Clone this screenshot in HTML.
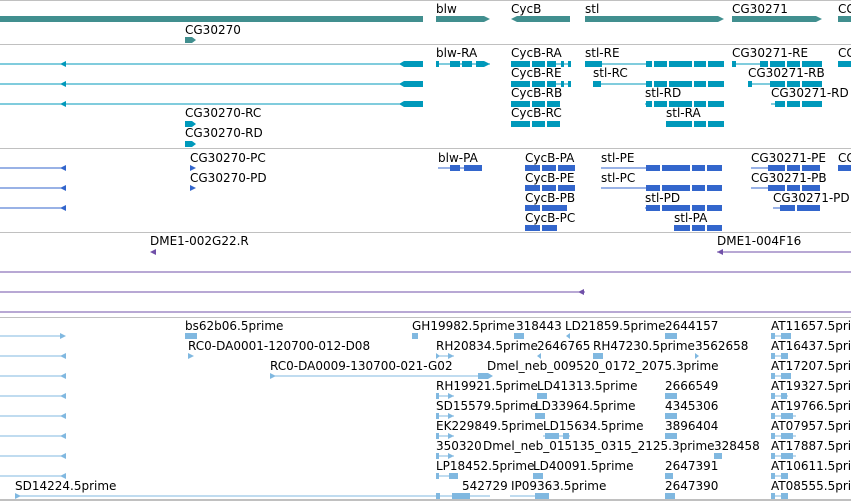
<!DOCTYPE html>
<html><head><meta charset="utf-8"><style>
html,body{margin:0;padding:0;background:#fff;width:851px;height:501px;overflow:hidden}
svg{display:block}
text{font-family:"DejaVu Sans",sans-serif;font-size:12px;fill:#000}
</style></head><body>
<svg width="851" height="501" xmlns="http://www.w3.org/2000/svg">
<g fill="#c0c0c0">
<rect x="0" y="0" width="851" height="1"/><rect x="0" y="44" width="851" height="1"/>
<rect x="0" y="148" width="851" height="1"/><rect x="0" y="232" width="851" height="1"/>
<rect x="0" y="317" width="851" height="1"/><rect x="0" y="499" width="851" height="2"/>
</g>
<g fill="#418f8f">
<rect x="0" y="16" width="423" height="6"/>
<polygon points="436,16 484,16 490,19 484,22 436,22"/>
<polygon points="511,19 517,16 570,16 570,22 517,22"/>
<polygon points="585,16 718,16 724,19 718,22 585,22"/>
<polygon points="732,16 816,16 822,19 816,22 732,22"/>
<rect x="838" y="16" width="13" height="6"/>
<polygon points="185,37 192,37 196,40 192,43 185,43"/>
</g>
<text x="185" y="34">CG30270</text>
<text x="436" y="13">blw</text><text x="511" y="13">CycB</text><text x="585" y="13">stl</text><text x="732" y="13">CG30271</text><text x="838" y="13">CG</text>
<g fill="#0099bb">
<rect x="0" y="63.5" width="423" height="1"/><rect x="0" y="83.5" width="423" height="1"/><rect x="0" y="103.5" width="423" height="1"/>
<polygon points="60,64 66,61 66,67"/><polygon points="60,84 66,81 66,87"/><polygon points="60,104 66,101 66,107"/>
<polygon points="399,64 404,61 423,61 423,67 404,67"/><polygon points="399,84 404,81 423,81 423,87 404,87"/><polygon points="399,104 404,101 423,101 423,107 404,107"/>
<polygon points="185,121 192,121 196,124 192,127 185,127"/><polygon points="185,141 192,141 196,144 192,147 185,147"/>
<rect x="436" y="63.5" width="54" height="1"/><rect x="436" y="61" width="3" height="6"/><rect x="450" y="61" width="10" height="6"/><rect x="462" y="61" width="10" height="6"/><polygon points="476,61 484,61 490,64 484,67 476,67"/>
<rect x="511" y="61" width="45" height="6"/><rect x="556" y="63.5" width="15" height="1"/><rect x="561" y="61" width="3" height="6"/><rect x="568" y="61" width="3" height="6"/>
<rect x="511" y="81" width="45" height="6"/><rect x="556" y="83.5" width="15" height="1"/><rect x="561" y="81" width="3" height="6"/><rect x="568" y="81" width="3" height="6"/>
<rect x="511" y="101" width="49" height="6"/>
<rect x="511" y="121" width="49" height="6"/>
<rect x="585" y="63.5" width="139" height="1"/><rect x="585" y="61" width="17" height="6"/><rect x="646" y="61" width="78" height="6"/>
<rect x="593" y="83.5" width="131" height="1"/><rect x="593" y="81" width="8" height="6"/><rect x="646" y="81" width="78" height="6"/>
<rect x="645" y="103.5" width="79" height="1"/><rect x="646" y="101" width="78" height="6"/>
<rect x="666" y="121" width="58" height="6"/>
<rect x="732" y="63.5" width="90" height="1"/><rect x="732" y="61" width="4" height="6"/><rect x="760" y="61" width="62" height="6"/>
<rect x="748" y="83.5" width="74" height="1"/><rect x="748" y="81" width="4" height="6"/><rect x="770" y="81" width="52" height="6"/>
<rect x="771" y="103.5" width="51" height="1"/><rect x="775" y="101" width="47" height="6"/>
<rect x="838" y="61" width="13" height="6"/>
</g>
<g fill="#fff"><rect x="652" y="61" width="2" height="6"/><rect x="667" y="61" width="2" height="6"/><rect x="692" y="61" width="2" height="6"/><rect x="706" y="61" width="2" height="6"/>
<rect x="652" y="81" width="2" height="6"/><rect x="667" y="81" width="2" height="6"/><rect x="692" y="81" width="2" height="6"/><rect x="706" y="81" width="2" height="6"/>
<rect x="652" y="101" width="2" height="6"/><rect x="667" y="101" width="2" height="6"/><rect x="692" y="101" width="2" height="6"/><rect x="706" y="101" width="2" height="6"/>
<rect x="692" y="121" width="2" height="6"/><rect x="706" y="121" width="2" height="6"/>
<rect x="530" y="61" width="2" height="6"/><rect x="545" y="61" width="2" height="6"/><rect x="530" y="81" width="2" height="6"/><rect x="545" y="81" width="2" height="6"/><rect x="530" y="101" width="2" height="6"/><rect x="545" y="101" width="2" height="6"/><rect x="530" y="121" width="2" height="6"/><rect x="545" y="121" width="2" height="6"/>
<rect x="768" y="61" width="2" height="6"/><rect x="785" y="61" width="2" height="6"/><rect x="800" y="61" width="2" height="6"/>
<rect x="785" y="81" width="2" height="6"/><rect x="800" y="81" width="2" height="6"/><rect x="785" y="101" width="2" height="6"/><rect x="800" y="101" width="2" height="6"/></g>
<text x="436" y="57">blw-RA</text><text x="511" y="57">CycB-RA</text><text x="585" y="57">stl-RE</text><text x="732" y="57">CG30271-RE</text><text x="838" y="57">CG</text>
<text x="511" y="77">CycB-RE</text><text x="593" y="77">stl-RC</text><text x="748" y="77">CG30271-RB</text>
<text x="511" y="97">CycB-RB</text><text x="645" y="97">stl-RD</text><text x="771" y="97">CG30271-RD</text>
<text x="185" y="117">CG30270-RC</text><text x="511" y="117">CycB-RC</text><text x="666" y="117">stl-RA</text>
<text x="185" y="137">CG30270-RD</text>
<g fill="#3366cc">
<rect x="0" y="167.5" width="65" height="1"/><rect x="0" y="187.5" width="65" height="1"/><rect x="0" y="207.5" width="65" height="1"/>
<polygon points="60,168 66,165 66,171"/><polygon points="60,188 66,185 66,191"/><polygon points="60,208 66,205 66,211"/>
<polygon points="190,165 196,168 190,171"/><polygon points="190,185 196,188 190,191"/>
<rect x="438" y="167.5" width="44" height="1"/><rect x="450" y="165" width="10" height="6"/><rect x="464" y="165" width="18" height="6"/>
<rect x="525" y="165" width="50" height="6"/><rect x="525" y="185" width="50" height="6"/><rect x="525" y="205" width="42" height="6"/><rect x="525" y="225" width="32" height="6"/>
<rect x="601" y="167.5" width="121" height="1"/><rect x="646" y="165" width="76" height="6"/>
<rect x="601" y="187.5" width="121" height="1"/><rect x="646" y="185" width="76" height="6"/>
<rect x="645" y="207.5" width="77" height="1"/><rect x="646" y="205" width="76" height="6"/>
<rect x="674" y="225" width="48" height="6"/>
<rect x="751" y="167.5" width="69" height="1"/><rect x="768" y="165" width="52" height="6"/>
<rect x="751" y="187.5" width="69" height="1"/><rect x="768" y="185" width="52" height="6"/>
<rect x="773" y="207.5" width="47" height="1"/><rect x="780" y="205" width="40" height="6"/>
<rect x="838" y="165" width="13" height="6"/>
</g>
<g fill="#fff"><rect x="540" y="165" width="2" height="6"/><rect x="556" y="165" width="2" height="6"/><rect x="540" y="185" width="2" height="6"/><rect x="556" y="185" width="2" height="6"/><rect x="540" y="205" width="2" height="6"/><rect x="540" y="225" width="2" height="6"/>
<rect x="660" y="165" width="2" height="6"/><rect x="690" y="165" width="2" height="6"/><rect x="705" y="165" width="2" height="6"/><rect x="660" y="185" width="2" height="6"/><rect x="690" y="185" width="2" height="6"/><rect x="705" y="185" width="2" height="6"/><rect x="660" y="205" width="2" height="6"/><rect x="690" y="205" width="2" height="6"/><rect x="705" y="205" width="2" height="6"/><rect x="690" y="225" width="2" height="6"/><rect x="705" y="225" width="2" height="6"/>
<rect x="785" y="165" width="2" height="6"/><rect x="800" y="165" width="2" height="6"/><rect x="785" y="185" width="2" height="6"/><rect x="800" y="185" width="2" height="6"/><rect x="795" y="205" width="2" height="6"/></g>
<text x="190" y="162">CG30270-PC</text><text x="190" y="182">CG30270-PD</text>
<text x="438" y="162">blw-PA</text><text x="525" y="162">CycB-PA</text><text x="601" y="162">stl-PE</text><text x="751" y="162">CG30271-PE</text><text x="838" y="162">CG</text>
<text x="525" y="182">CycB-PE</text><text x="601" y="182">stl-PC</text><text x="751" y="182">CG30271-PB</text>
<text x="525" y="202">CycB-PB</text><text x="645" y="202">stl-PD</text><text x="773" y="202">CG30271-PD</text>
<text x="525" y="222">CycB-PC</text><text x="674" y="222">stl-PA</text>
<g fill="#7050a8">
<polygon points="150,252 156,249 156,255"/>
<rect x="717" y="251.5" width="134" height="1"/><polygon points="717,252 723,249 723,255"/>
<rect x="0" y="271.5" width="851" height="1"/><rect x="0" y="291.5" width="585" height="1"/><polygon points="578,292 584,289 584,295"/>
<rect x="0" y="311.5" width="851" height="1"/>
</g>
<text x="150" y="245">DME1-002G22.R</text><text x="717" y="245">DME1-004F16</text>
<g fill="#80b8e0">
<rect x="0" y="335.5" width="65" height="1"/><polygon points="60,333 66,336 60,339"/>
<rect x="0" y="355.5" width="65" height="1"/><polygon points="60,356 66,353 66,359"/>
<rect x="0" y="375.5" width="65" height="1"/><polygon points="60,376 66,373 66,379"/>
<rect x="0" y="395.5" width="65" height="1"/><polygon points="60,396 66,393 66,399"/>
<rect x="0" y="415.5" width="65" height="1"/><polygon points="60,416 66,413 66,419"/>
<rect x="0" y="435.5" width="65" height="1"/><polygon points="60,436 66,433 66,439"/>
<rect x="0" y="455.5" width="65" height="1"/><polygon points="60,456 66,453 66,459"/>
<rect x="0" y="475.5" width="65" height="1"/><polygon points="60,476 66,473 66,479"/>
<rect x="15" y="495.5" width="475" height="1"/><polygon points="15,493 21,496 15,499"/>
<rect x="185" y="333" width="12" height="6"/><polygon points="188,353 194,356 188,359"/>
<rect x="270" y="375.5" width="220" height="1"/><polygon points="270,373 276,376 270,379"/><rect x="478" y="373" width="10" height="6"/><polygon points="488,373 493,376 488,379"/>
<rect x="412" y="333" width="6" height="6"/><rect x="514" y="333" width="10" height="6"/><polygon points="566,336 570,333 570,339"/>
<rect x="665" y="333" width="12" height="6"/><rect x="771" y="335.5" width="17" height="1"/><rect x="771" y="333" width="4" height="6"/><rect x="781" y="333" width="10" height="6"/>
<rect x="436" y="355.5" width="18" height="1"/><polygon points="436,353 440,356 436,359"/><polygon points="448,353 454,356 448,359"/><polygon points="537,356 541,353 541,359"/><rect x="593" y="353" width="10" height="6"/><polygon points="695,353 699,356 695,359"/>
<rect x="771" y="355.5" width="17" height="1"/><rect x="771" y="353" width="4" height="6"/><rect x="781" y="353" width="7" height="6"/>
<rect x="771" y="375.5" width="17" height="1"/><rect x="771" y="373" width="4" height="6"/><rect x="781" y="373" width="10" height="6"/>
<rect x="436" y="395.5" width="18" height="1"/><rect x="436" y="393" width="3" height="6"/><polygon points="448,393 454,396 448,399"/><rect x="537" y="393" width="10" height="6"/><rect x="665" y="393" width="12" height="6"/><rect x="771" y="395.5" width="17" height="1"/><rect x="771" y="393" width="4" height="6"/><rect x="781" y="393" width="6" height="6"/>
<rect x="436" y="415.5" width="18" height="1"/><rect x="436" y="413" width="3" height="6"/><polygon points="448,413 454,416 448,419"/><rect x="535" y="413" width="10" height="6"/><rect x="665" y="413" width="12" height="6"/><rect x="771" y="415.5" width="25" height="1"/><rect x="771" y="413" width="4" height="6"/><rect x="781" y="413" width="12" height="6"/>
<rect x="436" y="435.5" width="18" height="1"/><rect x="436" y="433" width="3" height="6"/><polygon points="448,433 454,436 448,439"/><rect x="543" y="435.5" width="27" height="1"/><rect x="545" y="433" width="14" height="6"/><rect x="563" y="433" width="6" height="6"/><rect x="665" y="433" width="12" height="6"/><rect x="771" y="435.5" width="25" height="1"/><rect x="771" y="433" width="4" height="6"/><rect x="781" y="433" width="12" height="6"/>
<rect x="436" y="455.5" width="18" height="1"/><rect x="436" y="453" width="3" height="6"/><polygon points="448,453 454,456 448,459"/><rect x="714" y="453" width="8" height="6"/><rect x="771" y="455.5" width="25" height="1"/><rect x="771" y="453" width="4" height="6"/><rect x="781" y="453" width="12" height="6"/>
<rect x="436" y="475.5" width="22" height="1"/><rect x="436" y="473" width="3" height="6"/><rect x="449" y="473" width="9" height="6"/><rect x="533" y="473" width="10" height="6"/><rect x="665" y="473" width="8" height="6"/><rect x="771" y="475.5" width="17" height="1"/><rect x="771" y="473" width="4" height="6"/><rect x="781" y="473" width="7" height="6"/>
<rect x="436" y="493" width="4" height="6"/><rect x="452" y="493" width="10" height="6"/><rect x="462" y="493" width="8" height="6"/><rect x="510" y="495.5" width="39" height="1"/><rect x="535" y="493" width="14" height="6"/><rect x="665" y="493" width="10" height="6"/><rect x="771" y="495.5" width="17" height="1"/><rect x="771" y="493" width="4" height="6"/><rect x="781" y="493" width="7" height="6"/>
</g>
<text x="185" y="330">bs62b06.5prime</text><text x="412" y="330">GH19982.5prime</text><text x="516" y="330">318443</text><text x="565" y="330">LD21859.5prime</text><text x="665" y="330">2644157</text><text x="771" y="330">AT11657.5prime</text>
<text x="188" y="350">RC0-DA0001-120700-012-D08</text><text x="436" y="350">RH20834.5prime</text><text x="537" y="350">2646765</text><text x="593" y="350">RH47230.5prime</text><text x="695" y="350">3562658</text><text x="771" y="350">AT16437.5prime</text>
<text x="270" y="370">RC0-DA0009-130700-021-G02</text><text x="487" y="370">Dmel_neb_009520_0172_2075.3prime</text><text x="771" y="370">AT17207.5prime</text>
<text x="436" y="390">RH19921.5prime</text><text x="537" y="390">LD41313.5prime</text><text x="665" y="390">2666549</text><text x="771" y="390">AT19327.5prime</text>
<text x="436" y="410">SD15579.5prime</text><text x="535" y="410">LD33964.5prime</text><text x="665" y="410">4345306</text><text x="771" y="410">AT19766.5prime</text>
<text x="436" y="430">EK229849.5prime</text><text x="543" y="430">LD15634.5prime</text><text x="665" y="430">3896404</text><text x="771" y="430">AT07957.5prime</text>
<text x="436" y="450">350320</text><text x="483" y="450">Dmel_neb_015135_0315_2125.3prime</text><text x="714" y="450">328458</text><text x="771" y="450">AT17887.5prime</text>
<text x="436" y="470">LP18452.5prime</text><text x="533" y="470">LD40091.5prime</text><text x="665" y="470">2647391</text><text x="771" y="470">AT10611.5prime</text>
<text x="15" y="490">SD14224.5prime</text><text x="462" y="490">542729</text><text x="511" y="490">IP09363.5prime</text><text x="665" y="490">2647390</text><text x="771" y="490">AT08555.5prime</text>
</svg>
</body></html>
